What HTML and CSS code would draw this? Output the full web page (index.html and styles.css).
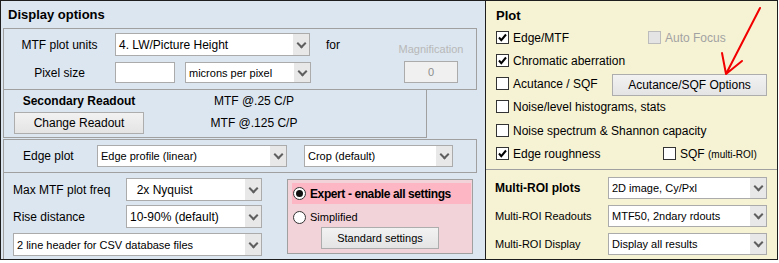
FILE: index.html
```html
<!DOCTYPE html>
<html lang="en">
<head>
  <meta charset="UTF-8" />
  <title>Display options</title>
  <link rel="stylesheet" href="styles.css">
</head>
<body>
  <div class="dialog">
    <div class="pane-left">
      <div class="title">Display options</div>

      <div class="frame frame-units">
        <div class="units-main">
          <div class="row row-units">
            <span class="label-units">MTF plot units</span>
            <div class="combo combo-units"><span class="combo-text">4. LW/Picture Height</span><span class="combo-btn"></span></div>
            <span class="for">for</span>
          </div>
          <div class="row row-pixel">
            <span class="label-units">Pixel size</span>
            <div class="field-pixel"></div>
            <div class="combo combo-pixel small"><span class="combo-text">microns per pixel</span><span class="combo-btn"></span></div>
          </div>
        </div>
        <div class="mag">
          <span class="mag-label">Magnification</span>
          <div class="mag-field">0</div>
        </div>
      </div>

      <div class="frame frame-readout">
        <div class="readout-left">
          <div class="readout-title">Secondary Readout</div>
          <button class="btn btn-readout">Change Readout</button>
        </div>
        <div class="readout-values">
          <div>MTF @.25 C/P</div>
          <div>MTF @.125 C/P</div>
        </div>
      </div>

      <div class="frame frame-edge">
        <span class="label-edge">Edge plot</span>
        <div class="combo combo-edge small"><span class="combo-text">Edge profile (linear)</span><span class="combo-btn"></span></div>
        <div class="combo combo-crop small"><span class="combo-text">Crop (default)</span><span class="combo-btn"></span></div>
      </div>

      <div class="bottom">
        <div class="bottom-left">
          <div class="row row-freq">
            <span class="label-freq">Max MTF plot freq</span>
            <div class="combo combo-freq"><span class="combo-text">&nbsp;&nbsp;2x Nyquist</span><span class="combo-btn"></span></div>
          </div>
          <div class="row row-freq row-rise">
            <span class="label-freq">Rise distance</span>
            <div class="combo combo-freq"><span class="combo-text">10-90% (default)</span><span class="combo-btn"></span></div>
          </div>
          <div class="combo combo-csv small"><span class="combo-text">2 line header for CSV database files</span><span class="combo-btn"></span></div>
        </div>

        <div class="mode">
          <div class="mode-expert">
            <span class="radio radio-on"></span>
            <span class="expert-text">Expert - enable all settings</span>
          </div>
          <div class="mode-simple">
            <span class="radio"></span>
            <span class="small">Simplified</span>
          </div>
          <button class="btn btn-standard small">Standard settings</button>
        </div>
      </div>
    </div>

    <div class="pane-right">
      <div class="plot">
        <div class="plot-title">Plot</div>
        <div class="check-row">
          <label class="check-item w-edge"><span class="check checked"><svg viewBox="0 0 11 11"><path d="M2 5.5l2.3 2.6L9 2.5"/></svg></span>Edge/MTF</label>
          <label class="check-item disabled"><span class="check"></span>Auto Focus</label>
        </div>
        <div class="check-row">
          <label class="check-item"><span class="check checked"><svg viewBox="0 0 11 11"><path d="M2 5.5l2.3 2.6L9 2.5"/></svg></span>Chromatic aberration</label>
        </div>
        <div class="check-row">
          <label class="check-item w-acut"><span class="check"></span>Acutance / SQF</label>
          <button class="btn btn-acut">Acutance/SQF Options</button>
        </div>
        <div class="check-row">
          <label class="check-item"><span class="check"></span>Noise/level histograms, stats</label>
        </div>
        <div class="check-row row-shift">
          <label class="check-item"><span class="check"></span>Noise spectrum &amp; Shannon capacity</label>
        </div>
        <div class="check-row">
          <label class="check-item w-rough"><span class="check checked"><svg viewBox="0 0 11 11"><path d="M2 5.5l2.3 2.6L9 2.5"/></svg></span>Edge roughness</label>
          <label class="check-item"><span class="check"></span><span>SQF <span class="tiny">(multi-ROI)</span></span></label>
        </div>
      </div>

      <div class="multi">
        <div class="multi-row">
          <span class="multi-label multi-head">Multi-ROI plots</span>
          <div class="combo combo-multi small"><span class="combo-text">2D image, Cy/Pxl</span><span class="combo-btn"></span></div>
        </div>
        <div class="multi-row">
          <span class="multi-label small">Multi-ROI Readouts</span>
          <div class="combo combo-multi small"><span class="combo-text">MTF50, 2ndary rdouts</span><span class="combo-btn"></span></div>
        </div>
        <div class="multi-row">
          <span class="multi-label small">Multi-ROI Display</span>
          <div class="combo combo-multi small"><span class="combo-text">Display all results</span><span class="combo-btn"></span></div>
        </div>
      </div>

      <svg class="pointer" width="291" height="90" viewBox="0 0 291 90">
        <path d="M274 7 L240 73 M236 52 L240 73 L256 60"/>
      </svg>
    </div>
  </div>
</body>
</html>
```

FILE: styles.css
```css
:root {
  --line: #1e1e1e;
  --frame: #a0a0a0;
  --blue: #dce6f0;
  --cream: #f6f2d4;
  --pink: #f3d3da;
  --pink-hi: #fdb6c3;
  --field-border: #ababab;
}
* {
  box-sizing: border-box;
}
body {
  margin: 0;
  background: #fff;
  font-family: 'Liberation Sans', Arial, sans-serif;
  font-size: 12px;
  color: #000;
}
.dialog {
  width: 778px;
  height: 260px;
  border: 1px solid var(--line);
  display: flex;
}
.small { font-size: 11px; }
.row {
  display: flex;
  align-items: center;
}

/* left pane */
.pane-left {
  width: 485px;
  background: var(--blue);
  border-right: 1px solid var(--line);
  display: flex;
  flex-direction: column;
}
.title {
  height: 27px;
  line-height: 27px;
  padding-left: 7px;
  font-weight: bold;
  font-size: 13px;
}
.frame {
  margin-left: 2px;
  border: 1px solid var(--frame);
}
.frame-units {
  width: 474px;
  height: 62px;
  display: flex;
}
.units-main {
  width: 395px;
  padding-top: 4px;
}
.row-units { height: 23px; }
.label-units {
  width: 111px;
  text-align: center;
}
.combo-units { width: 195px; height: 23px; }
.for { margin-left: 16px; }
.row-pixel {
  height: 21px;
  margin-top: 6px;
}
.field-pixel {
  width: 60px;
  height: 21px;
  background: #fff;
  border: 1px solid var(--field-border);
}
.combo-pixel {
  width: 126px;
  height: 21px;
  margin-left: 10px;
}
.mag {
  width: 64px;
  padding-top: 14px;
  display: flex;
  flex-direction: column;
  align-items: center;
}
.mag-label {
  font-size: 11px;
  line-height: 13px;
  color: #b8b8b8;
}
.mag-field {
  width: 54px;
  height: 22px;
  margin-top: 5px;
  background: #f0f0f0;
  border: 1px solid var(--field-border);
  color: #8c8c8c;
  font-size: 11px;
  line-height: 20px;
  text-align: center;
}
.frame-readout {
  width: 424px;
  height: 49px;
  margin-top: -1px;
  display: flex;
}
.readout-left {
  width: 140px;
  padding-left: 10px;
  display: flex;
  flex-direction: column;
  align-items: center;
}
.readout-title {
  line-height: 22px;
  font-weight: bold;
  white-space: nowrap;
}
.readout-values {
  width: 96px;
  margin-left: 62px;
  line-height: 22px;
  text-align: center;
  white-space: nowrap;
}
.frame-edge {
  width: 474px;
  height: 34px;
  margin-top: 1px;
  padding-left: 19px;
  display: flex;
  align-items: center;
}
.label-edge { width: 74px; }
.combo-edge { width: 190px; height: 22px; }
.combo-crop { width: 149px; height: 22px; margin-left: 17px; }
.bottom {
  flex: 1;
  margin-left: 2px;
  border-left: 1px solid var(--frame);
  padding-top: 5px;
  display: flex;
}
.bottom-left {
  width: 258px;
  padding-left: 9px;
}
.row-freq { height: 23px; }
.row-rise { margin-top: 4px; }
.label-freq { width: 113px; }
.combo-freq { width: 136px; height: 23px; }
.combo-csv {
  width: 249px;
  height: 23px;
  margin-top: 5px;
  background: #e7eef8;
}
.mode {
  width: 186px;
  height: 75px;
  margin: 1px 0 0 25px;
  padding: 3px 0 0 4px;
  background: var(--pink);
  border: 1px solid var(--frame);
}
.mode-expert {
  width: 179px;
  height: 21px;
  padding-left: 1px;
  background: var(--pink-hi);
  display: flex;
  align-items: center;
  gap: 4px;
}
.expert-text {
  font-weight: bold;
  letter-spacing: -0.4px;
}
.mode-simple {
  height: 23px;
  padding: 3px 0 0 1px;
  display: flex;
  align-items: center;
  gap: 4px;
}
.radio {
  width: 13px;
  height: 13px;
  border: 1px solid #333;
  border-radius: 50%;
  background: #fff;
  display: flex;
  align-items: center;
  justify-content: center;
}
.radio-on::after {
  content: '';
  width: 7px;
  height: 7px;
  border-radius: 50%;
  background: #111;
}
.btn-standard {
  width: 118px;
  height: 22px;
  margin-left: 29px;
}

/* shared controls */
.combo {
  display: flex;
  background: #fff;
  border: 1px solid var(--field-border);
}
.combo-text {
  flex: 1;
  padding-left: 3px;
  display: flex;
  align-items: center;
  white-space: nowrap;
  overflow: hidden;
}
.combo-btn {
  width: 16px;
  background: #e8e8e8;
  display: flex;
  align-items: center;
  justify-content: center;
}
.combo-btn::before {
  content: '';
  width: 5px;
  height: 5px;
  margin-top: -3px;
  border-right: 2px solid #5f5f5f;
  border-bottom: 2px solid #5f5f5f;
  transform: rotate(45deg);
}
.btn {
  font-family: inherit;
  font-size: 12px;
  color: #000;
  padding: 0;
  background: linear-gradient(#f2f2f2, #e4e4e4);
  border: 1px solid #adadad;
}
.btn.small { font-size: 11px; }
.btn-readout {
  width: 130px;
  height: 22px;
}

/* right pane */
.pane-right {
  flex: 1;
  background: var(--cream);
  position: relative;
  display: flex;
  flex-direction: column;
}
.plot {
  height: 169px;
  padding: 5px 0 0 10px;
  border-bottom: 1px solid var(--frame);
}
.plot-title {
  line-height: 20px;
  font-weight: bold;
  font-size: 13px;
}
.check-row {
  height: 23px;
  display: flex;
  align-items: center;
}
.row-shift { margin-top: 1px; }
.check-item {
  display: flex;
  align-items: center;
  gap: 4px;
  white-space: nowrap;
}
.w-edge { width: 152px; }
.w-acut { width: 116px; }
.w-rough { width: 167px; }
.check {
  width: 13px;
  height: 13px;
  background: #fff;
  border: 1px solid #333;
  display: flex;
}
.check svg {
  width: 11px;
  height: 11px;
}
.check path {
  fill: none;
  stroke: #000;
  stroke-width: 2;
}
.disabled { color: #a2a2a2; }
.disabled .check {
  background: #e4e4e4;
  border-color: #bcbcbc;
}
.tiny { font-size: 10px; }
.btn-acut {
  width: 155px;
  height: 22px;
  margin-top: 2px;
}
.multi {
  padding: 4px 0 0 9px;
}
.multi-row {
  height: 28px;
  display: flex;
  align-items: center;
}
.multi-label { width: 113px; }
.multi-head {
  font-weight: bold;
  font-size: 12px;
}
.combo-multi { width: 159px; height: 22px; }
.pointer {
  position: absolute;
  left: 0;
  top: 0;
  pointer-events: none;
}
.pointer path {
  fill: none;
  stroke: #f20000;
  stroke-width: 2;
  stroke-linecap: round;
  stroke-linejoin: round;
}
```
